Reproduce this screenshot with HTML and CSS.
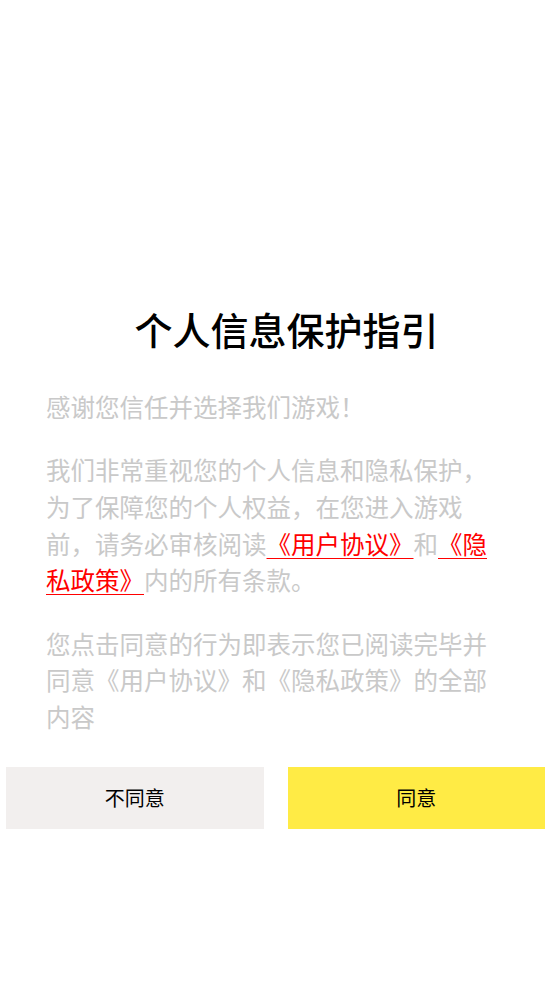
FILE: index.html
```html
<!DOCTYPE html>
<html lang="zh-CN">
<head>
<meta charset="utf-8">
<title>个人信息保护指引</title>
<link rel="stylesheet" href="styles.css">
</head>
<body>
<div class="page">
  <h1 class="title">个人信息保护指引</h1>
  <div class="content">
    <p class="para">感谢您信任并选择我们游戏！</p>
    <p class="para">我们非常重视您的个人信息和隐私保护，为了保障您的个人权益，在您进入游戏前，请务必审核阅读<a class="link">《用户协议》</a>和<a class="link">《隐私政策》</a>内的所有条款。</p>
    <p class="para">您点击同意的行为即表示您已阅读完毕并同意《用户协议》和《隐私政策》的全部内容</p>
  </div>
  <div class="actions">
    <div class="btn btn-decline">不同意</div>
    <div class="btn btn-accept">同意</div>
  </div>
</div>
</body>
</html>
```
FILE: styles.css
```css
html, body {
  margin: 0;
  padding: 0;
  background: #ffffff;
}
body {
  font-family: "Noto Sans CJK SC", "Noto Sans", sans-serif;
}
.page {
  width: 551px;
  min-height: 981px;
  display: flex;
  flex-direction: column;
  padding-top: 306px;
  box-sizing: border-box;
}
.title {
  margin: 0;
  padding-left: 22px;
  font-size: 38px;
  line-height: 46px;
  font-weight: 500;
  color: #000;
  text-align: center;
}
.content {
  margin-top: 37px;
  padding: 0 46px;
  display: flex;
  flex-direction: column;
  gap: 26.5px;
}
.para {
  margin: 0;
  font-size: 24.5px;
  line-height: 36.7px;
  color: #c9c9c9;
}
.link {
  color: #ff0000;
  text-decoration: underline;
  text-decoration-thickness: 1px;
  text-underline-offset: 4px;
}
.actions {
  margin-top: 31px;
  display: flex;
  gap: 24px;
  padding: 0 6px;
}
.btn {
  flex: 1;
  height: 62px;
  display: flex;
  align-items: center;
  justify-content: center;
  font-size: 20px;
  color: #000;
}
.btn-decline {
  background: #f2efee;
}
.btn-accept {
  background: #ffeb45;
}
```
